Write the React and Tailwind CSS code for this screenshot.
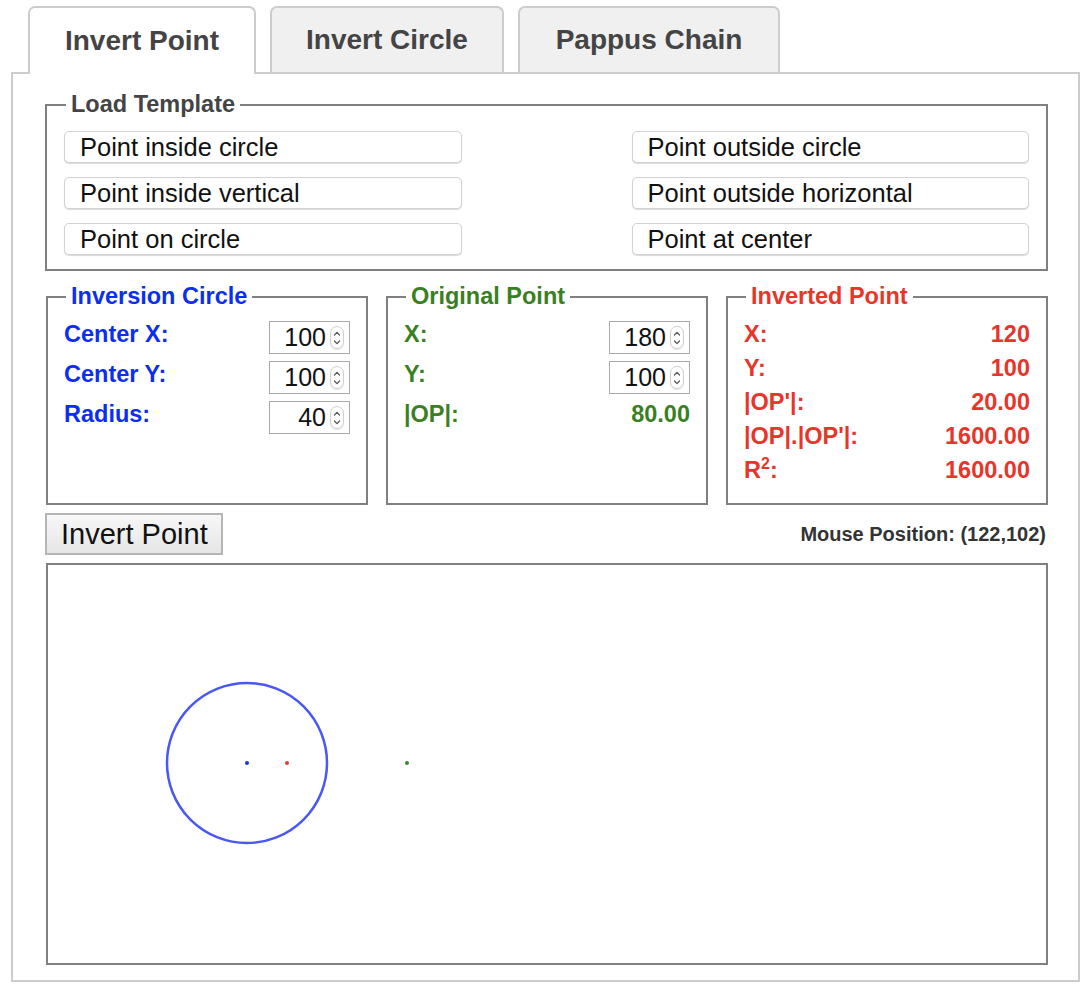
import React from 'react';

// Numeric field with the small native-looking spinner pill on the right
function NumberBox({ value }) {
  return (
    <div className="flex items-center justify-end w-[81px] h-[33px] border border-[#a9a9a9] bg-white pr-[5px] font-normal">
      <span className="text-[25px] leading-none text-[#111]">{value}</span>
      <span className="ml-[4px] flex flex-col items-center justify-center w-[14px] h-[23px] rounded-full border border-[#cfcfcf] shadow-[0_1px_1px_rgba(0,0,0,0.12)]">
        <svg width="8" height="18" viewBox="0 0 8 18" fill="none" stroke="#555" strokeWidth="1.2" strokeLinecap="round" strokeLinejoin="round">
          <path d="M1.5 6 L4 3.3 L6.5 6" />
          <path d="M1.5 12 L4 14.7 L6.5 12" />
        </svg>
      </span>
    </div>
  );
}

function Legend({ children, color }) {
  return (
    <legend className={`ml-[2px] px-[5px] text-[23.5px] leading-[27px] font-bold ${color}`}>
      {children}
    </legend>
  );
}

function TemplateButton({ label }) {
  return (
    <button className="h-[32px] w-full text-left pl-[15px] rounded-[5px] bg-white border border-[#d2d2d2] shadow-[0_1px_1px_rgba(0,0,0,0.15)] text-[25.5px] leading-[28px] text-[#111]">
      {label}
    </button>
  );
}

const templates = [
  'Point inside circle',
  'Point outside circle',
  'Point inside vertical',
  'Point outside horizontal',
  'Point on circle',
  'Point at center',
];

export default function App() {
  const circle = { x: 100, y: 100, r: 40 };
  const point = { x: 180, y: 100 };
  const inv = { x: 120, y: 100 };

  return (
    <div className="w-[1090px] h-[991px] bg-white font-['Liberation_Sans',Arial,sans-serif] pt-[6px]">
      {/* Tabs */}
      <div className="flex items-end gap-[14px] ml-[28px] relative z-10">
        <div className="w-[228px] h-[68px] -mb-[2px] bg-white border-2 border-b-0 border-[#cccccc] rounded-t-[7px] flex items-center justify-center text-[28px] font-bold text-[#444]">
          Invert Point
        </div>
        <div className="w-[234px] h-[66px] bg-[#f0f0f0] border-2 border-b-0 border-[#cccccc] rounded-t-[7px] flex items-center justify-center text-[28px] font-bold text-[#444]">
          Invert Circle
        </div>
        <div className="w-[262px] h-[66px] bg-[#f0f0f0] border-2 border-b-0 border-[#cccccc] rounded-t-[7px] flex items-center justify-center text-[28px] font-bold text-[#444]">
          Pappus Chain
        </div>
      </div>

      {/* Panel */}
      <div className="ml-[11px] w-[1069px] border-2 border-[#cccccc] pt-[17px] pl-[32px] pr-[30px] pb-[15px]">
        {/* Load Template */}
        <fieldset className="border-2 border-[#808080] px-[17px] pt-[13px] pb-[14px]">
          <Legend color="text-[#444]">Load Template</Legend>
          <div className="grid grid-cols-2 gap-x-[170px] gap-y-[14px]">
            {templates.map(t => <TemplateButton key={t} label={t} />)}
          </div>
        </fieldset>

        {/* Three info boxes */}
        <div className="grid grid-cols-3 gap-[18px] mt-[12px] ml-[1px]">
          <fieldset className="border-2 border-[#808080] px-[16px] pt-[11px] pb-[19px]">
            <Legend color="text-[#0b2ef2]">Inversion Circle</Legend>
            <div className="flex flex-col gap-[7px] text-[23.5px] leading-[27px] font-bold text-[#0b2ef2]">
              <div className="flex justify-between items-start"><span>Center X:</span><NumberBox value={circle.x} /></div>
              <div className="flex justify-between items-start"><span>Center Y:</span><NumberBox value={circle.y} /></div>
              <div className="flex justify-between items-start"><span>Radius:</span><NumberBox value={circle.r} /></div>
            </div>
          </fieldset>

          <fieldset className="border-2 border-[#808080] px-[16px] pt-[11px] pb-[19px]">
            <Legend color="text-[#3b7f23]">Original Point</Legend>
            <div className="flex flex-col gap-[7px] text-[23.5px] leading-[27px] font-bold text-[#3b7f23]">
              <div className="flex justify-between items-start"><span>X:</span><NumberBox value={point.x} /></div>
              <div className="flex justify-between items-start"><span>Y:</span><NumberBox value={point.y} /></div>
              <div className="flex justify-between items-start"><span>|OP|:</span><span>80.00</span></div>
            </div>
          </fieldset>

          <fieldset className="border-2 border-[#808080] px-[16px] pt-[11px] pb-[19px]">
            <Legend color="text-[#e8352b]">Inverted Point</Legend>
            <div className="flex flex-col gap-[7px] text-[23.5px] leading-[27px] font-bold text-[#e8352b]">
              <div className="flex justify-between"><span>X:</span><span>{inv.x}</span></div>
              <div className="flex justify-between"><span>Y:</span><span>{inv.y}</span></div>
              <div className="flex justify-between"><span>|OP'|:</span><span>20.00</span></div>
              <div className="flex justify-between"><span>|OP|.|OP'|:</span><span>1600.00</span></div>
              <div className="flex justify-between h-[27px]">
                <span>R<span className="relative -top-[9px] text-[16px] leading-[0]">2</span>:</span>
                <span>1600.00</span>
              </div>
            </div>
          </fieldset>
        </div>

        {/* Action row */}
        <div className="flex items-center justify-between mt-[8px]">
          <button className="w-[178px] h-[42px] border-2 border-[#b5b5b5] bg-gradient-to-b from-[#f7f7f7] to-[#e6e6e6] text-left pl-[14px] text-[29px] leading-none text-[#111]">
            Invert Point
          </button>
          <span className="mr-[2px] text-[20px] font-bold text-[#333]">Mouse Position: (122,102)</span>
        </div>

        {/* Canvas */}
        <div className="mt-[8px] ml-[1px] h-[402px] border-2 border-[#808080]">
          <svg width="998" height="398" viewBox="0 0 998 398">
            <circle cx="199" cy="198" r={circle.r * 2} fill="none" stroke="#4857f5" strokeWidth="2.5" />
            <circle cx="199" cy="198" r="2" fill="#2233dd" />
            <circle cx={inv.x * 2 - 1} cy="198" r="2" fill="#ee3a2e" />
            <circle cx={point.x * 2 - 1} cy="198" r="2" fill="#3b8a34" />
          </svg>
        </div>
      </div>
    </div>
  );
}
